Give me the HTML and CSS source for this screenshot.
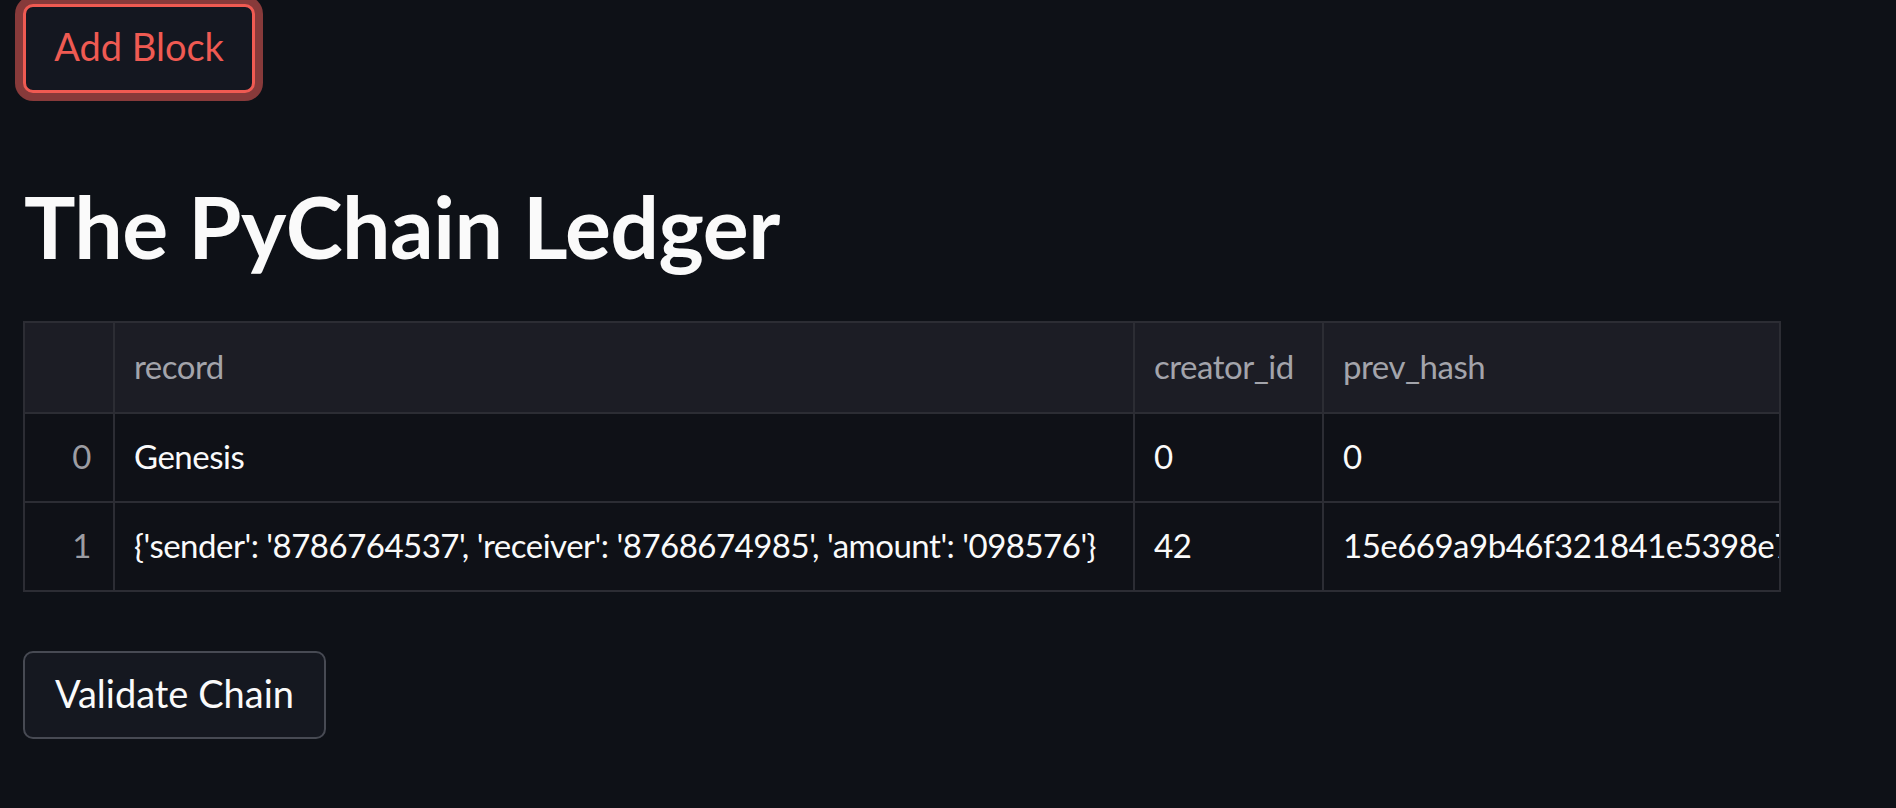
FILE: index.html
```html
<!DOCTYPE html>
<html>
<head>
<meta charset="utf-8">
<link rel="stylesheet" href="styles.css">
</head>
<body>
<main class="page">
  <button class="btn btn-focus">Add Block</button>
  <h1 class="title">The PyChain Ledger</h1>
  <div class="frame">
    <table class="grid">
      <colgroup>
        <col class="c-idx"><col class="c-rec"><col class="c-cre"><col class="c-hash">
      </colgroup>
      <thead>
        <tr><th class="idx"></th><th>record</th><th>creator_id</th><th>prev_hash</th></tr>
      </thead>
      <tbody>
        <tr><td class="idx">0</td><td>Genesis</td><td>0</td><td>0</td></tr>
        <tr><td class="idx">1</td><td>{'sender': '8786764537', 'receiver': '8768674985', 'amount': '098576'}</td><td>42</td><td class="hash">15e669a9b46f321841e5398e72a1c0f3d5b8e9a7c2d4f6b8a0e1c3d5f7a9b2c4</td></tr>
      </tbody>
    </table>
  </div>
  <button class="btn btn-plain">Validate Chain</button>
</main>
</body>
</html>
```
FILE: styles.css
```css
html, body {
  margin: 0;
  padding: 0;
  background: #0e1117;
  font-family: Lato, "Open Sans", sans-serif;
  color: #fafafa;
}
.page {
  padding: 4px 0 0 23px;
  display: flex;
  flex-direction: column;
  align-items: flex-start;
}
.btn {
  display: inline-flex;
  align-items: center;
  justify-content: center;
  box-sizing: border-box;
  height: 89px;
  padding: 0 0 3px 0;
  border-radius: 10px;
  font-family: Lato, "Open Sans", sans-serif;
  font-size: 38px;
  line-height: 1.2;
  background: #141720;
}
.btn-focus {
  width: 232px;
  color: #ef5a52;
  border: 3px solid #ef5a52;
  box-shadow: 0 0 0 8px #873a3a;
}
.btn-plain {
  width: 303px;
  height: 88px;
  color: #fafafa;
  border: 2px solid #474a53;
  background: #151820;
  margin-top: 59px;
}
.title {
  margin: 81px 0 0 1px;
  font-size: 86px;
  font-weight: 700;
  line-height: 1.2;
  letter-spacing: -0.5px;
  color: #fafafa;
}
.frame {
  margin-top: 44px;
  width: 1758px;
  border: 2px solid #2c2d34;
  box-sizing: border-box;
  overflow: hidden;
}
.grid {
  border-collapse: collapse;
  table-layout: fixed;
  width: 1754px;
  font-size: 33px;
  letter-spacing: -0.5px;
}
.c-idx { width: 89px; }
.c-rec { width: 1020px; }
.c-cre { width: 189px; }
.c-hash { width: 456px; }
.grid th, .grid td {
  height: 84px;
  padding: 0 0 3px 19px;
  text-align: left;
  white-space: nowrap;
  overflow: hidden;
  border-left: 2px solid #2c2d34;
  border-top: 2px solid #2c2d34;
  font-weight: 400;
}
.grid thead th {
  height: 86px;
  border-top: none;
  background: #1c1d25;
  color: #a3a4ab;
}
.grid th:first-child, .grid td:first-child { border-left: none; }
.grid tbody td {
  color: #fafafa;
  background: #0f1117;
}
.grid .hash { text-overflow: clip; }
.grid .idx {
  text-align: right;
  padding: 0 22px 3px 0;
  color: #9c9da3;
}
```
